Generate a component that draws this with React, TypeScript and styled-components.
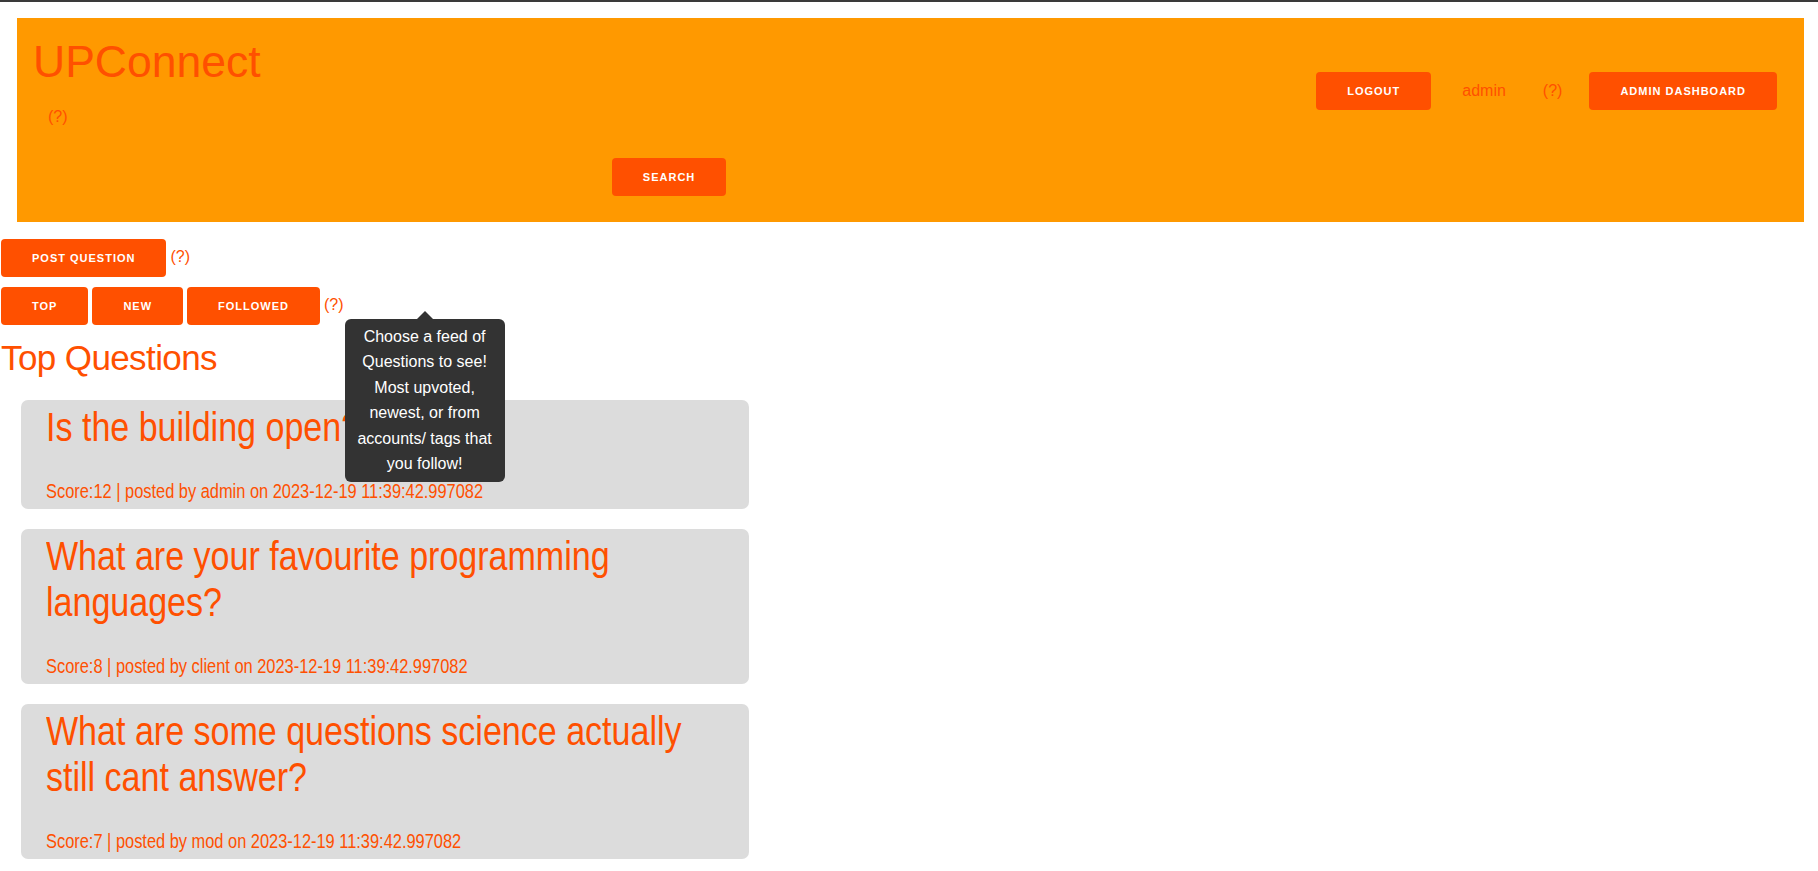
import React from "react";
import styled, { createGlobalStyle, css } from "styled-components";

const ACCENT = "#ff5000";
const NARROW = 0.82;

const Global = createGlobalStyle`
  html, body { margin: 0; padding: 0; background: #fff; overflow: hidden; }
  body {
    font-family: "Liberation Sans", Arial, sans-serif;
    font-size: 16px;
    color: ${ACCENT};
  }
`;

/* Narrow face (Arial Narrow metrics) emulated from Liberation Sans */
const condensed = css`
  font-family: "Liberation Sans Narrow", "Liberation Sans", Arial, sans-serif;
  width: calc(100% / ${NARROW});
  transform: scaleX(${NARROW});
  transform-origin: 0 0;
`;

const TopBar = styled.div`
  height: 2px;
  background: #3a3a3a;
`;

const Header = styled.header`
  display: flex;
  align-items: flex-start;
  margin: 16px 14px 0 17px;
  height: 204px;
  background: #ff9900;
  padding-right: 27px;
`;

const Brand = styled.div`
  flex: 1;
  display: flex;
  flex-direction: column;
  align-items: flex-start;
  padding-top: 18px;
`;

const Logo = styled.h1`
  margin: 0 0 0 16px;
  font-size: 44.5px;
  font-weight: 400;
  line-height: 51px;
`;

const Help = styled.span`
  position: relative;
  font-size: 16px;
  line-height: 18px;
  cursor: help;
`;

const BrandHelp = styled(Help)`
  margin: 21px 0 0 31px;
`;

const Button = styled.button`
  height: 38px;
  padding: 0 31px;
  border: none;
  border-radius: 4px;
  background: ${ACCENT};
  color: #fff;
  font-family: "Liberation Sans", Arial, sans-serif;
  font-size: 11px;
  font-weight: 700;
  letter-spacing: 1px;
  text-transform: uppercase;
  cursor: pointer;
  white-space: nowrap;
`;

const SearchButton = styled(Button)`
  align-self: center;
  margin: 32px 0 0 5px;
`;

const Nav = styled.nav`
  display: flex;
  align-items: center;
  gap: 27px;
  margin-top: 54px;
`;

const UserLink = styled.span`
  padding: 0 10px 0 4px;
  font-size: 16px;
`;

const Main = styled.main`
  padding: 17px 0 0 1px;
`;

const Toolbars = styled.div`
  display: flex;
  flex-direction: column;
  gap: 10px;
`;

const Toolbar = styled.div`
  display: flex;
  align-items: baseline;
  gap: 4px;
`;

const Tooltip = styled.span`
  position: absolute;
  left: calc(100% + 1px);
  top: calc(100% + 4.5px);
  width: 156px;
  padding: 5px 2px;
  background: #333;
  color: #fff;
  text-align: center;
  border-radius: 6px;
  font-size: 16px;
  line-height: 25.6px;
  z-index: 2;

  &::after {
    content: "";
    position: absolute;
    bottom: 100%;
    left: 50%;
    margin-left: -8px;
    border: 8px solid transparent;
    border-bottom-color: #333;
  }
`;

const FeedHeading = styled.h2`
  margin: 13px 0 23px;
  font-size: 35px;
  font-weight: 400;
  line-height: 39px;
  letter-spacing: -0.6px;
`;

const CardList = styled.div`
  display: flex;
  flex-direction: column;
  gap: 20px;
  margin-left: 20px;
`;

const Card = styled.article`
  width: 728px;
  box-sizing: border-box;
  padding: 4px 25px 6px;
  background: #dcdcdc;
  border-radius: 7px;
`;

const QuestionTitle = styled.h3`
  ${condensed};
  margin: 0;
  font-size: 41.5px;
  font-weight: 400;
  line-height: 46px;
`;

const Meta = styled.p`
  ${condensed};
  margin: 30px 0 0;
  font-size: 20px;
  line-height: 23px;
  white-space: nowrap;
`;

const questions = [
  { title: "Is the building open?", score: 12, author: "admin" },
  { title: "What are your favourite programming languages?", score: 8, author: "client" },
  { title: "What are some questions science actually still cant answer?", score: 7, author: "mod" },
];

export default function App() {
  return (
    <>
      <Global />
      <TopBar />
      <Header>
        <Brand>
          <Logo>UPConnect</Logo>
          <BrandHelp>(?)</BrandHelp>
          <SearchButton>Search</SearchButton>
        </Brand>
        <Nav>
          <Button>Logout</Button>
          <UserLink>admin</UserLink>
          <Help>(?)</Help>
          <Button>Admin Dashboard</Button>
        </Nav>
      </Header>
      <Main>
        <Toolbars>
          <Toolbar>
            <Button>Post Question</Button>
            <Help>(?)</Help>
          </Toolbar>
          <Toolbar>
            <Button>Top</Button>
            <Button>New</Button>
            <Button>Followed</Button>
            <Help>
              (?)
              <Tooltip>
                Choose a feed of Questions to see! Most upvoted, newest, or from accounts/ tags that you follow!
              </Tooltip>
            </Help>
          </Toolbar>
        </Toolbars>
        <FeedHeading>Top Questions</FeedHeading>
        <CardList>
          {questions.map((q) => (
            <Card key={q.title}>
              <QuestionTitle>{q.title}</QuestionTitle>
              <Meta>
                Score:{q.score} | posted by {q.author} on 2023-12-19 11:39:42.997082
              </Meta>
            </Card>
          ))}
        </CardList>
      </Main>
    </>
  );
}
